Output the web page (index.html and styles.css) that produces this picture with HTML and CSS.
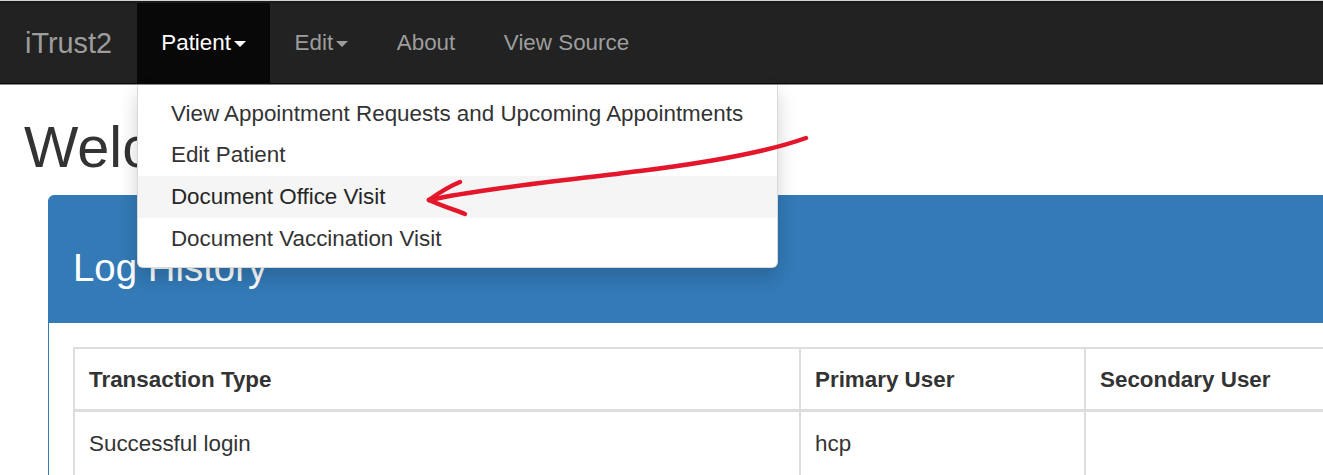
FILE: index.html
```html
<!DOCTYPE html>
<html lang="en">
<head>
<meta charset="utf-8">
<title>iTrust2</title>
<link rel="stylesheet" href="styles.css">
</head>
<body>
<div class="page">
  <nav class="navbar">
    <a class="brand" href="#">iTrust2</a>
    <ul class="nav">
      <li class="nav-item dropdown active">
        <a class="nav-link" href="#">Patient<span class="caret"></span></a>
        <ul class="dropdown-menu">
          <li><a class="menu-link" href="#">View Appointment Requests and Upcoming Appointments</a></li>
          <li><a class="menu-link" href="#">Edit Patient</a></li>
          <li><a class="menu-link hover" href="#">Document Office Visit</a></li>
          <li><a class="menu-link" href="#">Document Vaccination Visit</a></li>
        </ul>
      </li>
      <li class="nav-item"><a class="nav-link" href="#">Edit<span class="caret"></span></a></li>
      <li class="nav-item"><a class="nav-link" href="#">About</a></li>
      <li class="nav-item"><a class="nav-link" href="#">View Source</a></li>
    </ul>
  </nav>

  <main class="content">
    <h1 class="title">Welcome to iTrust2 - HCP</h1>
    <div class="panel">
      <div class="panel-heading">
        <h3 class="panel-title">Log History</h3>
      </div>
      <div class="panel-body">
        <table class="log-table">
          <colgroup>
            <col class="c1"><col class="c2"><col class="c3"><col class="c4">
          </colgroup>
          <thead>
            <tr><th>Transaction Type</th><th>Primary User</th><th>Secondary User</th><th>Date/Time</th></tr>
          </thead>
          <tbody>
            <tr><td>Successful login</td><td>hcp</td><td></td><td></td></tr>
          </tbody>
        </table>
      </div>
    </div>
  </main>

  <svg class="annotation" width="1323" height="475" viewBox="0 0 1323 475" aria-hidden="true">
    <path d="M806 137 C 770 150, 720 160, 640 170 C 560 180, 480 188, 429 199" />
    <path d="M429 199 C 440 191, 450 185, 460 181" />
    <path d="M429 199 C 442 205, 455 209, 465 213" />
  </svg>
</div>
</body>
</html>
```

FILE: styles.css
```css
html, body {
  margin: 0;
  padding: 0;
  overflow: hidden;
  background: #fff;
}

body {
  font-family: "Liberation Sans", Arial, Helvetica, sans-serif;
  font-size: 22.4px;
  line-height: 32px;
  color: #333;
  width: 1323px;
  height: 475px;
}

.page {
  position: relative;
  width: 1323px;
  height: 475px;
  border-top: 1px solid #d4d4d4;
  box-sizing: border-box;
}

/* ---------- navbar ---------- */
.navbar {
  display: flex;
  align-items: stretch;
  background: #222;
  border-top: 2px solid #1a1a1a;
  border-bottom: 1px solid #080808;
  box-shadow: 0 1px 0 #8a8a8a;
  height: 80px;
  position: relative;
  z-index: 5;
}

.brand {
  display: block;
  padding: 24px 25px 24px 25px;
  font-size: 28.8px;
  line-height: 32px;
  color: #9d9d9d;
  text-decoration: none;
}

.nav {
  display: flex;
  list-style: none;
  margin: 0;
  padding: 0;
}

.nav-item {
  position: relative;
}

.nav-link {
  display: block;
  padding: 24px 24.3px;
  line-height: 32px;
  color: #9d9d9d;
  text-decoration: none;
}

.nav-item.active > .nav-link {
  background: #080808;
  color: #fff;
}

.caret {
  display: inline-block;
  width: 0;
  height: 0;
  margin-left: 3px;
  vertical-align: middle;
  border-top: 6.4px solid;
  border-left: 6.4px solid transparent;
  border-right: 6.4px solid transparent;
}

/* ---------- dropdown ---------- */
.dropdown-menu {
  position: absolute;
  top: 100%;
  left: 0;
  margin: 2px 0 0;
  padding: 8px 0;
  list-style: none;
  background: #fff;
  border: 1px solid rgba(0, 0, 0, 0.15);
  border-top: 0;
  border-radius: 0 0 6px 6px;
  box-shadow: 0 9px 19px rgba(0, 0, 0, 0.175);
  white-space: nowrap;
  z-index: 10;
}

.menu-link {
  display: block;
  padding: 4.8px 34px 4.8px 33px;
  line-height: 32px;
  color: #333;
  text-decoration: none;
}

.menu-link.hover {
  background: #f5f5f5;
  color: #262626;
}

/* ---------- content ---------- */
.content {
  padding: 0 24px;
}

.title {
  margin: 32px 0 16px;
  font-size: 57.6px;
  font-weight: 500;
  line-height: 63px;
  color: #333;
}

.panel {
  margin-left: 24px;
  width: 1500px;
  border: 1.6px solid #337ab7;
  border-radius: 6px;
  background: #fff;
}

.panel-heading {
  background: #337ab7;
  color: #fff;
  padding: 18px 24px;
  border-radius: 4px 4px 0 0;
}

.panel-title {
  margin: 33px 0 16px;
  font-size: 38.4px;
  font-weight: 500;
  line-height: 42px;
  color: #fff;
}

.panel-body {
  padding: 24px;
}

.log-table {
  border-collapse: collapse;
  table-layout: fixed;
  width: 1400px;
  border: 2px solid #ddd;
}

.log-table .c1 { width: 726px; }
.log-table .c2 { width: 285px; }
.log-table .c3 { width: 340px; }
.log-table .c4 { width: 300px; }

.log-table th,
.log-table td {
  text-align: left;
  padding: 14.8px 14px 12.8px;
  line-height: 32px;
  border: 2px solid #ddd;
}

.log-table th {
  font-weight: 700;
  vertical-align: bottom;
  border-bottom-width: 3px;
}

.log-table td {
  vertical-align: top;
  padding-top: 16.8px;
  padding-bottom: 16px;
}

/* ---------- annotation ---------- */
.annotation {
  position: absolute;
  left: 0;
  top: 0;
  z-index: 20;
  pointer-events: none;
  fill: none;
  stroke: #e3162b;
  stroke-width: 4.5;
  stroke-linecap: round;
  stroke-linejoin: round;
}
```
